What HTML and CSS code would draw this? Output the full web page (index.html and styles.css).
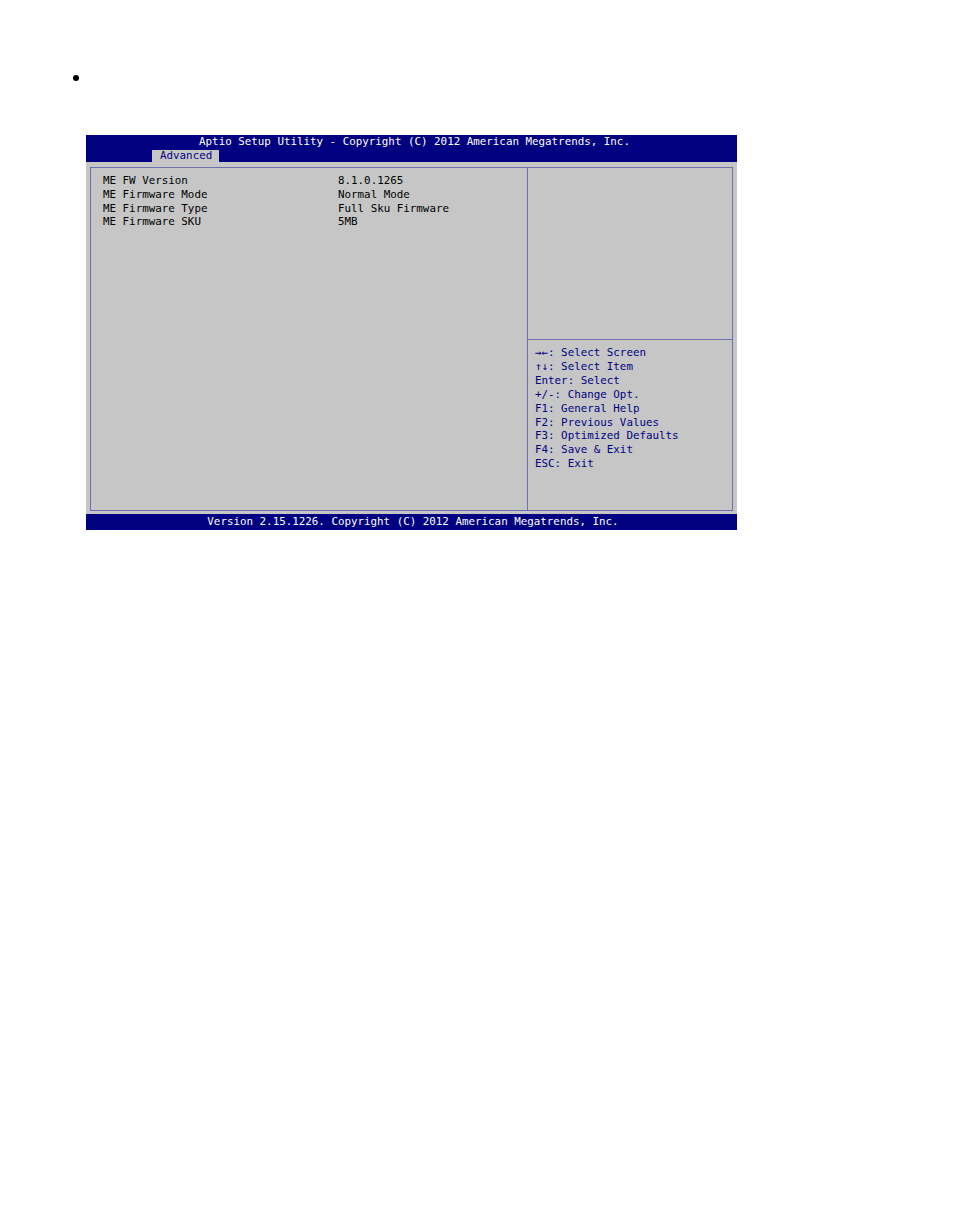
FILE: index.html
```html
<!DOCTYPE html>
<html lang="en">
<head>
    <meta charset="UTF-8">
    <title>ME Firmware Information</title>
    <link rel="stylesheet" href="styles.css">
</head>
<body>
    <div class="bullet"></div>

    <div class="bios">
        <div class="bios-header">
            <div class="bios-title">Aptio Setup Utility - Copyright (C) 2012 American Megatrends, Inc.</div>
            <div class="bios-tabs">
                <span class="tab active">Advanced</span>
            </div>
        </div>

        <div class="bios-main">
            <div class="panel">
                <div class="settings">
                    <div class="row"><span class="label">ME FW Version</span><span class="value">8.1.0.1265</span></div>
                    <div class="row"><span class="label">ME Firmware Mode</span><span class="value">Normal Mode</span></div>
                    <div class="row"><span class="label">ME Firmware Type</span><span class="value">Full Sku Firmware</span></div>
                    <div class="row"><span class="label">ME Firmware SKU</span><span class="value">5MB</span></div>
                </div>
                <div class="side">
                    <div class="side-info"></div>
                    <div class="side-help">
                        <p>&rarr;&larr;: Select Screen</p>
                        <p>&uarr;&darr;: Select Item</p>
                        <p>Enter: Select</p>
                        <p>+/-: Change Opt.</p>
                        <p>F1: General Help</p>
                        <p>F2: Previous Values</p>
                        <p>F3: Optimized Defaults</p>
                        <p>F4: Save &amp; Exit</p>
                        <p>ESC: Exit</p>
                    </div>
                </div>
            </div>
        </div>

        <div class="bios-footer">Version 2.15.1226. Copyright (C) 2012 American Megatrends, Inc.</div>
    </div>
</body>
</html>
```

FILE: styles.css
```css
body {
    margin: 8px;
    background: #fff;
    font-family: "DejaVu Sans Mono", "Liberation Mono", monospace;
}

/* list bullet above the screenshot */
.bullet {
    width: 6px;
    height: 6px;
    border-radius: 50%;
    background: #000;
    margin: 67px 0 0 65px;
}

.bios {
    width: 651px;
    margin: 54px 0 0 78px;
    font-size: 10.85px;
    background: #c6c6c6;
}

.bios-header {
    background: #000080;
    height: 27px;
    display: flex;
    flex-direction: column;
}

.bios-title {
    color: #fff;
    text-align: center;
    line-height: 13px;
    padding-left: 6px;
}

.bios-tabs {
    display: flex;
    padding-left: 66px;
    margin-top: auto;
}

.tab {
    background: #c6c6c6;
    color: #000080;
    padding: 0 7px 0 8px;
    line-height: 12px;
    height: 12px;
}

.bios-main {
    padding: 5px 4px 3px 4px;
}

.panel {
    height: 342px;
    display: flex;
    border: 1px solid #6f6fb0;
}

.settings {
    width: 424px;
    padding: 6px 0 0 12px;
    border-right: 1px solid #6f6fb0;
}

.row {
    display: flex;
    line-height: 13.8px;
    color: #000;
}

.label {
    width: 235px;
}

.side {
    flex: 1;
    display: flex;
    flex-direction: column;
}

.side-info {
    height: 171px;
    border-bottom: 1px solid #6f6fb0;
}

.side-help {
    padding: 6px 0 0 7px;
    color: #000080;
}

.side-help p {
    margin: 0;
    line-height: 13.9px;
}

.bios-footer {
    background: #000080;
    color: #fff;
    text-align: center;
    height: 16px;
    line-height: 16px;
    padding-left: 3px;
}
```
